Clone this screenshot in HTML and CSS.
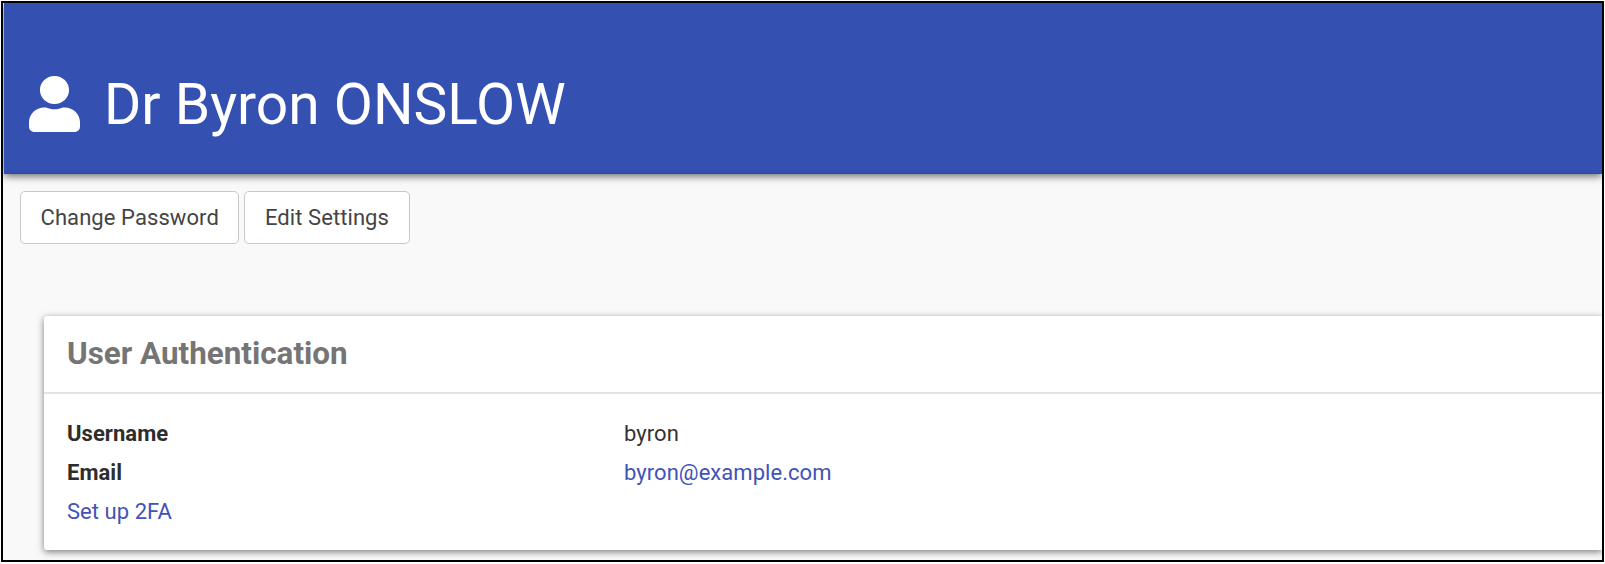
FILE: index.html
```html
<!DOCTYPE html>
<html lang="en">
<head>
<meta charset="utf-8">
<title>Dr Byron ONSLOW</title>
<link rel="stylesheet" href="styles.css">
</head>
<body>
<div class="frame">
  <header class="banner">
    <svg class="user-icon" viewBox="0 0 448 512" preserveAspectRatio="none" aria-hidden="true"><path fill="#fff" d="M224 256c70.700 0 128-57.300 128-128S294.700 0 224 0 96 57.300 96 128s57.300 128 128 128zm89.600 32h-16.700c-22.200 10.200-46.900 16-72.900 16s-50.600-5.800-72.900-16h-16.700C60.200 288 0 348.200 0 422.400V464c0 26.500 21.500 48 48 48h352c26.500 0 48-21.500 48-48v-41.600c0-74.200-60.200-134.400-134.400-134.400z"/></svg>
    <h1 class="title">Dr Byron ONSLOW</h1>
  </header>
  <main class="content">
    <div class="actions">
      <a class="btn">Change Password</a>
      <a class="btn">Edit Settings</a>
    </div>
    <section class="card">
      <h2 class="card-title">User Authentication</h2>
      <div class="card-body">
        <div class="row"><strong class="label">Username</strong><span>byron</span></div>
        <div class="row"><strong class="label">Email</strong><a class="link">byron@example.com</a></div>
        <div class="row"><a class="link">Set up 2FA</a></div>
      </div>
    </section>
  </main>
</div>
</body>
</html>
```
FILE: styles.css
```css
* { box-sizing: border-box; }
html, body { margin: 0; height: 100%; background: #fff; overflow: hidden; }
body { padding: 1px; font-family: Roboto, sans-serif; color: #333; }
.frame {
  height: 561px;
  border: 2px solid #000;
  background: #f9f9f9;
  overflow: hidden;
}
.banner {
  height: 171px;
  margin-left: 1px;
  background: #3451b2;
  box-shadow: 0 2px 8px rgba(0,0,0,.6);
  border-bottom: 1px solid #2d48b4;
  display: flex;
  align-items: center;
  padding: 32px 0 0 25px;
  position: relative;
}
.user-icon { width: 51px; height: 56px; display: block; }
.title { margin: 0 0 -3px 24px; font-size: 56.9px; font-weight: 400; color: #fff; line-height: 1; }
.content { padding: 17px 0 0 17px; }
.actions { display: flex; gap: 5px; }
.btn {
  height: 53px;
  padding: 0 19.5px;
  display: flex;
  align-items: center;
  background: #fff;
  border: 1px solid #c8c8c8;
  border-radius: 5px;
  font-size: 22px;
  letter-spacing: .08px;
  color: #444;
}
.card {
  margin: 72px 0 0 24px;
  background: #fff;
  border-radius: 3px 0 0 3px;
  box-shadow: 0 2px 7px rgba(0,0,0,.5);
  height: 234px;
}
.card-title {
  margin: 0;
  height: 78px;
  padding: 0 23px 2px;
  display: flex;
  align-items: center;
  font-size: 31.4px;
  font-weight: 700;
  color: #757575;
  border-bottom: 2px solid #e4e4e4;
}
.card-body { padding: 20px 23px; font-size: 22px; letter-spacing: .05px; }
.row { display: flex; height: 39px; align-items: center; }
.label { width: 557px; font-weight: 700; color: #2d2d2d; }
.link { color: #4153b7; }
```
